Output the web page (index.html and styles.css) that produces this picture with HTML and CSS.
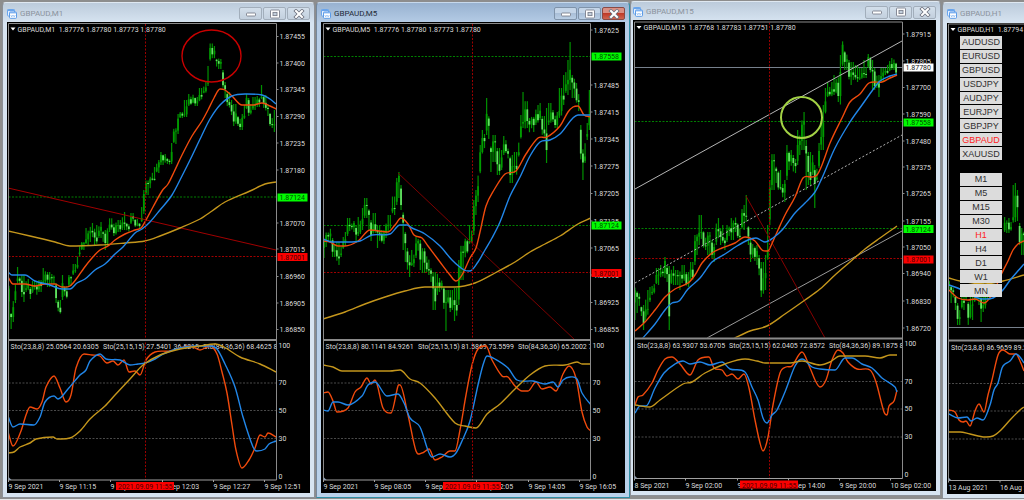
FILE: index.html
```
<!DOCTYPE html>
<html lang="en">
<head>
<meta charset="utf-8">
<title>GBPAUD charts</title>
<link rel="stylesheet" href="styles.css">
</head>
<body>
<svg class="symbols" aria-hidden="true">
  <symbol id="chart-icon" viewBox="0 0 10 10">
    <rect x="0.5" y="0.5" width="7" height="6.5" rx="0.8" fill="#eaf3ff" stroke="#6aa5ec"/>
    <rect x="0.5" y="0.5" width="7" height="1.6" fill="#6aa5ec"/>
    <rect x="2.5" y="3" width="7" height="6.3" rx="0.8" fill="#fff" stroke="#5c9be6"/>
    <rect x="2.5" y="3" width="7" height="1.4" fill="#7fb2f0"/>
    <path d="M3.8 6l.9 1.9L6 6l1.2 1.9L8.3 6" fill="none" stroke="#8dbbf2" stroke-width="0.8"/>
  </symbol>
  <symbol id="min-icon" viewBox="0 0 12 10">
    <rect x="1.5" y="4" width="9" height="3" rx="0.8" fill="#fff" stroke="#7b7f8c" stroke-width="0.9"/>
  </symbol>
  <symbol id="max-icon" viewBox="0 0 12 10">
    <rect x="1.5" y="1" width="9" height="8" rx="0.8" fill="#fff" stroke="#7b7f8c" stroke-width="0.9"/>
    <rect x="4" y="3.4" width="4" height="3.2" fill="#c3cfdd" stroke="#7b7f8c" stroke-width="0.9"/>
  </symbol>
  <symbol id="close-icon" viewBox="0 0 12 10">
    <path d="M3 2l6 6M9 2l-6 6" fill="none" stroke="#6d717e" stroke-width="3.6" stroke-linecap="square"/>
    <path d="M3 2l6 6M9 2l-6 6" fill="none" stroke="#fff" stroke-width="2" stroke-linecap="square"/>
  </symbol>
</svg>

<main class="desktop">
  <section class="window">
    <header class="titlebar">
      <svg class="app-icon"><use href="#chart-icon"/></svg>
      <h2 class="title">GBPAUD,M1</h2>
      <button class="control" aria-label="Minimize"><svg><use href="#min-icon"/></svg></button>
      <button class="control" aria-label="Restore"><svg><use href="#max-icon"/></svg></button>
      <button class="control" aria-label="Close"><svg><use href="#close-icon"/></svg></button>
    </header>
    <svg class="chart" id="m1" viewBox="7 22 303 471"></svg>
  </section>

  <section class="window window-active">
    <header class="titlebar">
      <svg class="app-icon"><use href="#chart-icon"/></svg>
      <h2 class="title">GBPAUD,M5</h2>
      <button class="control" aria-label="Minimize"><svg><use href="#min-icon"/></svg></button>
      <button class="control" aria-label="Restore"><svg><use href="#max-icon"/></svg></button>
      <button class="control control-close" aria-label="Close"><svg><use href="#close-icon"/></svg></button>
    </header>
    <svg class="chart" id="m5" viewBox="321 22 304 471"></svg>
  </section>

  <section class="window window-raised">
    <header class="titlebar">
      <svg class="app-icon"><use href="#chart-icon"/></svg>
      <h2 class="title">GBPAUD,M15</h2>
      <button class="control" aria-label="Minimize"><svg><use href="#min-icon"/></svg></button>
      <button class="control" aria-label="Restore"><svg><use href="#max-icon"/></svg></button>
      <button class="control" aria-label="Close"><svg><use href="#close-icon"/></svg></button>
    </header>
    <svg class="chart" id="m15" viewBox="633 20 303 471"></svg>
  </section>

  <section class="window window-cut">
    <header class="titlebar">
      <svg class="app-icon"><use href="#chart-icon"/></svg>
      <h2 class="title">GBPAUD,H1</h2>
    </header>
    <svg class="chart" id="h1" viewBox="947 23 77 471"></svg>
    <nav class="switcher">
      <div class="switch-group">
        <button class="switch">AUDUSD</button>
        <button class="switch">EURUSD</button>
        <button class="switch">GBPUSD</button>
        <button class="switch">USDJPY</button>
        <button class="switch">AUDJPY</button>
        <button class="switch">EURJPY</button>
        <button class="switch">GBPJPY</button>
        <button class="switch switch-on">GBPAUD</button>
        <button class="switch">XAUUSD</button>
      </div>
      <div class="switch-group">
        <button class="switch">M1</button>
        <button class="switch">M5</button>
        <button class="switch">M15</button>
        <button class="switch">M30</button>
        <button class="switch switch-on">H1</button>
        <button class="switch">H4</button>
        <button class="switch">D1</button>
        <button class="switch">W1</button>
        <button class="switch">MN</button>
      </div>
    </nav>
  </section>
</main>
<script src="charts.js"></script>
</body>
</html>
```
FILE: styles.css
```
* {
  box-sizing: border-box;
}

body {
  margin: 0;
  background: #e4e6e8;
  font-family: Roboto, "Noto Sans", sans-serif;
  overflow: hidden;
}

.symbols {
  display: none;
}

.desktop {
  display: grid;
  grid-template-columns: 315fr 315fr 312fr 82fr;
  align-items: start;
  background: #8d8d8d;
}

.window {
  position: relative;
  margin: 2px 0 0 2px;
  padding: 0 4px 4px;
  border: 1px solid #8b9097;
  border-top-color: #dfe8f1;
  border-radius: 4px 4px 0 0;
  background: linear-gradient(#bccbdb, #d7e4f1 20px, #d7e4f1);
}

.window-active {
  margin-left: 1px;
  border-color: #2f8fa6;
  border-top-color: #c7d9ec;
  border-left-color: #74879c;
  background: linear-gradient(#98b2d0, #b5cce6 20px, #b9d1ea);
}

.window-raised {
  margin: 1px 1px 0 0;
  padding: 0 4px 4px 2px;
}

.window-raised .titlebar {
  height: 18px;
  padding-top: 2px;
}

.window-cut {
  margin-left: 0;
  padding-right: 0;
  border-right: 0;
  border-radius: 4px 0 0 0;
}

.window-cut .titlebar {
  height: 20px;
}

.titlebar {
  display: flex;
  align-items: center;
  gap: 1px;
  height: 19px;
  padding-top: 2px;
}

.app-icon {
  flex: none;
  width: 10px;
  height: 10px;
}

.title {
  flex: 1;
  margin: 0;
  padding-left: 2px;
  color: #8b939d;
  font-size: 8px;
  font-weight: 400;
  line-height: 12px;
}

.window-active .title {
  color: #1f2b38;
}

.control {
  display: grid;
  place-items: center;
  flex: none;
  width: 23px;
  height: 13px;
  padding: 0;
  border: 1px solid #a2aebb;
  border-radius: 2px;
  background: linear-gradient(#d3dfeb, #c3d0de);
}

.window-active .control {
  border-color: #7f93aa;
  background: linear-gradient(#c4d5e8 45%, #a9bfd8 50%, #b9cee5);
}

.window-active .control-close {
  border-color: #8a4a45;
  background: linear-gradient(#d98f84 45%, #bf3a28 50%, #cf6551);
}

.control svg {
  width: 12px;
  height: 10px;
}

.chart {
  display: block;
  width: 100%;
  height: auto;
  background: #000;
}

.chart text {
  font-size: 7px;
  fill: #dcdcdc;
  dominant-baseline: central;
  white-space: pre;
}

.chart .on-green {
  fill: #004a00;
}

.chart .on-red {
  fill: #4a0000;
}

.chart .on-white {
  fill: #202020;
}

.chart .line {
  fill: none;
  stroke-width: 1.4;
  stroke-linejoin: round;
}

.switcher {
  position: absolute;
  top: 33px;
  left: 17px;
  display: flex;
  flex-direction: column;
  gap: 13px;
  width: 42px;
}

.switch-group {
  display: grid;
  grid-auto-rows: 1fr;
  gap: 1px;
  height: 124px;
}

.switch {
  min-height: 0;
  padding: 0;
  border: 0;
  background: #dcdcdc;
  color: #303030;
  font: 9px/12px "Liberation Sans", Arial, sans-serif;
}

.switch-on {
  color: #f22;
}
```
FILE: charts.js
```
const NS = "http://www.w3.org/2000/svg";
const ORANGE = "#f04a0c", BLUE = "#2186e8", GOLD = "#c4961c";
const STEP = 2.14;

function add(parent, name, attrs, text) {
  const el = document.createElementNS(NS, name);
  for (const key in attrs) el.setAttribute(key, attrs[key]);
  if (text !== undefined) el.textContent = text;
  parent.appendChild(el);
  return el;
}

function numbers(s) {
  return s.trim().split(/\s+/).map(p => p.split(",").map(Number));
}

function segment(parent, x1, y1, x2, y2, stroke, extra) {
  add(parent, "line", Object.assign({ x1, y1, x2, y2, stroke, "stroke-width": 1 }, extra));
}

/* Rounded line through the points: each span is a cubic with gentle tangents. */
function curve(parent, points, stroke) {
  const p = numbers(points);
  const slope = i => {
    const a = p[Math.max(0, i - 1)], b = p[Math.min(p.length - 1, i + 1)];
    const turn = i > 0 && i < p.length - 1 && (p[i][1] - a[1]) * (b[1] - p[i][1]) <= 0;
    return turn ? 0 : (b[1] - a[1]) / (b[0] - a[0]);
  };
  let d = `M${p[0]}`;
  for (let i = 1; i < p.length; i++) {
    const a = p[i - 1], b = p[i], k = (b[0] - a[0]) / 3;
    d += `C${a[0] + k} ${a[1] + slope(i - 1) * k} ${b[0] - k} ${b[1] - slope(i) * k} ${b[0]} ${b[1]}`;
  }
  add(parent, "path", { d, class: "line", stroke });
}

/* One candle every STEP, its range read between the nearest known ranges. */
function candles(parent, ranges) {
  let seed = 7, i = 0;
  const rnd = () => (seed = (seed * 16807) % 2147483647) / 2147483647;
  const last = ranges[ranges.length - 1][0];
  let prev = (ranges[0][1] + ranges[0][2]) / 2;
  for (let x = ranges[0][0]; x <= last; x += STEP) {
    while (i < ranges.length - 2 && ranges[i + 1][0] < x) i++;
    const a = ranges[i], b = ranges[i + 1];
    if (b[0] - a[0] > 9) { continue; }
    const near = Math.abs(x - a[0]) < Math.abs(b[0] - x) ? a : b;
    const [, top, low] = near;
    const h = low - top;
    const open = Math.min(low - h * 0.12, Math.max(top + h * 0.12, prev));
    const close = top + h * (0.15 + 0.7 * rnd());
    const y1 = Math.min(open, close), y2 = Math.max(open, close);
    const wickTop = rnd() < 0.65 ? top : (top + y1) / 2;
    const wickLow = rnd() < 0.65 ? low : (low + y2) / 2;
    const down = close > open;
    add(parent, "rect", { x: x - 0.6, y: wickTop, width: 1.2, height: wickLow - wickTop, fill: "#009200" });
    add(parent, "rect", { x: x - 0.9, y: y1, width: 1.8, height: Math.max(1, y2 - y1), fill: down ? "#62e262" : "#009c00" });
    prev = close;
  }
}

function draw(id, c) {
  const svg = document.getElementById(id), { x0, x1, dy } = c;
  const y = v => v + dy;
  const full = x1 > 1024 ? 1024 : x1;
  const clip = add(add(svg, "defs", {}), "clipPath", { id: id + "-clip" });
  add(clip, "rect", { x: x0, y: y(24), width: full - x0, height: 456 });
  const clipTop = add(svg.firstChild, "clipPath", { id: id + "-top" });
  add(clipTop, "rect", { x: x0, y: y(24), width: full - x0, height: 315 });

  const plot = add(svg, "g", { "clip-path": `url(#${id}-clip)` });
  [383, 410.5, 438.5].forEach(v => segment(plot, x0, y(v), full, y(v), "#4a4a4a", { "stroke-dasharray": "2 1.5" }));
  c.sto.forEach(([tx, s]) => add(plot, "text", { x: tx, y: y(347) }, s));
  add(plot, "path", { d: `M${x0 + 2} ${y(27.5)}h5l-2.5 3z`, fill: "#fff" });
  add(plot, "text", { x: x0 + 9, y: y(29.5) }, c.head);

  const upper = add(plot, "g", { "clip-path": `url(#${id}-top)` });
  c.levels.forEach(([v, color, solid]) => segment(upper, x0, v, full, v, color, solid ? {} : { "stroke-dasharray": "2 1.5" }));
  candles(upper, numbers(c.candles));
  c.trends.forEach(([a, b, d, e, color, dash]) => segment(upper, a, b, d, e, color, dash ? { "stroke-dasharray": "2 2" } : {}));
  [GOLD, ORANGE, BLUE].forEach((color, n) => curve(upper, c.ma[n], color));
  [ORANGE, BLUE, GOLD].forEach((color, n) => curve(plot, c.osc[n], color));
  if (c.cross) segment(plot, c.cross, y(24), c.cross, y(480), "#9c0000", { "stroke-dasharray": "2 1.5" });
  if (c.ring) add(plot, "ellipse", c.ring);

  const grey = "#8a8a8a";
  segment(svg, x0, y(23.5), full, y(23.5), grey);
  segment(svg, x0, y(23.5), x0, y(480), grey);
  segment(svg, x0, y(340), full, y(340), grey, { "stroke-width": 2 });
  segment(svg, x0, y(480), full, y(480), "#a0a0a0");
  add(svg, "path", { d: `M${x0} ${y(477)}l3 3h-3z`, fill: "#8fa0b4" });
  if (full === x1) {
    segment(svg, x1, y(23.5), x1, y(480), grey);
    [[100, 345.5], [70, 383], [50, 410.5], [30, 438.5], [0, 476.5]].forEach(([n, v]) =>
      add(svg, "text", { x: x1 + 2, y: y(v) }, n));
  }

  c.times.forEach(([tx, s]) => {
    segment(svg, tx, y(480), tx, y(482), "#a0a0a0");
    add(svg, "text", { x: tx, y: y(487) }, s);
  });
  if (c.stamp) {
    add(svg, "rect", { x: c.stamp, y: y(482), width: 58, height: 8, fill: "#fb0000" });
    add(svg, "text", { x: c.stamp + 2, y: y(487), class: "on-red" }, "2021.09.09 11:55");
  }

  c.prices.forEach(([v, s]) => {
    segment(svg, x1, v, x1 + 2, v, grey);
    add(svg, "text", { x: x1 + 3, y: v + 0.5 }, s);
  });
  c.tags.forEach(([v, s, kind]) => {
    const fill = { green: "#00fb00", red: "#fb0000", white: "#fff" }[kind];
    add(svg, "rect", { x: x1 + 1, y: v - 4, width: 30, height: 8, fill });
    add(svg, "text", { x: x1 + 3, y: v + 0.5, class: "on-" + kind }, s);
  });
}

const GREEN_LEVEL = "#008000", RED_LEVEL = "#a00000";

draw("m1", {
  x0: 8.5, x1: 276.5, dy: 0, cross: 145.5, stamp: 116,
  head: "GBPAUD,M1  1.87776 1.87780 1.87773 1.87780",
  sto: [[10.5, "Sto(23,8,8) 25.0564 20.6305"], [103, "Sto(25,15,15) 27.5401 36.5215"], [203, "Sto(84,36,36) 68.4625 82.1804"]],
  levels: [[197, GREEN_LEVEL], [256.5, RED_LEVEL]],
  trends: [[8, 188, 276, 250, "#a00000"]],
  ring: { cx: 211.5, cy: 56, rx: 29.5, ry: 26, fill: "none", stroke: "#c80000", "stroke-width": 1.4 },
  candles: `9,283,320 11,312,329 14.5,295,327 16,278,303 18,267,283 20,275,284 23,275,302 27,274,292 30,287,304 33,281,293
    37,277,300 40,280,292 45,268,285 50,272,287 53,274,284 56,283,303 59.5,300,315 62,275,300 65,286,300 70,275,286 74,264,275
    77,248,270 79,240,256 83,242,250 87,228,245 92,223,242 95,225,246 100,222,238 104,230,250 108,226,246 111,212,232
    116,220,236 120,220,232 124,212,230 128,222,234 133,213,224 137,219,227 140,223,229 142,207,223 144,190,214 147,178,195
    150,175,193 153,167,182 157,160,173 161,152,165 164,154,165 168,158,167 171,143,164 174,126,144 178,114,134 182,112,118
    186,100,117 190,94,106 193,92,104 197,97,106 201,88,102 205,82,94 208,66,86 211,39,62 214,46,62 216,58,72 220,56,69
    222,70,90 224,82,98 228,92,110 232,100,115 235,104,126 238,116,126 241,114,130 244,105,120 246,94,110 250,98,116
    254,97,110 258,96,107 261,85,100 264,95,113 268,102,116 272,112,128 275.5,110,132`,
  ma: [
    "8,231 30,236 55,242 70,246 100,245 125,243 145,241 160,236 180,228 200,219 212,211 225,202 250,191 265,184 276,182",
    "8,277 13,284 25,284 35,286 45,284 55,284 62,287 70,286 77,278 84,268 92,258 100,250 108,246 115,240 125,234 135,230 141,228 146,220 153,207 162,191 168,184 174,172 182,155 192,136 202,121 208,110 214,98 220,89 225,90 232,96 242,105 253,105 262,103 270,106 276,109",
    "8,272 12,275 25,275 35,281 50,285 62,289 70,289 77,283 85,279 95,270 105,264 115,254 123,247 135,233 142,229 150,222 160,210 172,195 182,176 192,156 202,135 210,119 220,105 232,96 245,94 262,95 270,99 276,104"
  ],
  osc: [
    "8,432 13,446 21,431 26,415 30,407 37,409 42,402 46,387 54,376 60,388 66,402 71,395 76,368 84,354 92,355 100,356 107,363 113,361 118,365 124,360 129,372 135,371 140,375 146,360 155,352 170,351 180,348 190,346 200,350 210,346 217,354 222,372 227,393 232,425 236,450 242,468 249,460 255,448 260,435 265,437 268,433 276,437",
    "8,416 13,427 20,424 34,425 40,417 45,402 54,396 58,399 68,389 80,375 86,370 90,361 100,354 106,359 120,360 130,365 138,364 145,363 155,359 163,354 180,348 195,346 210,346 217,349 225,364 235,387 243,417 253,447 257,451 265,449 269,444 276,441",
    "8,453 14,452 20,447 30,443 36,439 53,437 57,439 70,438 80,431 90,419 105,406 115,395 130,379 143,365 160,355 180,349 200,346 215,344 224,347 240,357 260,364 276,372"
  ],
  times: [[8.5, "9 Sep 2021"], [59.5, "9 Sep 11:15"], [110.5, "9 Sep 11:39"], [162.5, "9 Sep 12:03"], [213.5, "9 Sep 12:27"], [264.5, "9 Sep 12:51"]],
  prices: [[36.5, "1.87455"], [63, "1.87400"], [89.5, "1.87345"], [116.5, "1.87290"], [143, "1.87235"], [170, "1.87180"],
    [223, "1.87070"], [249, "1.87015"], [276.5, "1.86960"], [303, "1.86905"], [329.5, "1.86850"]],
  tags: [[197.5, "1.87124", "green"], [257, "1.87001", "red"]]
});

draw("m5", {
  x0: 323.5, x1: 590.5, dy: 0, cross: 472.5, stamp: 443,
  head: "GBPAUD,M5  1.87776 1.87780 1.87773 1.87780",
  sto: [[325.5, "Sto(23,8,8) 80.1141 84.9261"], [418, "Sto(25,15,15) 81.5869 73.5599"], [518, "Sto(84,36,36) 65.2002 71.0645"]],
  levels: [[56.5, GREEN_LEVEL], [225.5, GREEN_LEVEL], [272.5, RED_LEVEL]],
  trends: [[398, 173, 575, 340, "#7c0000"]],
  candles: `324,238,258 327,230,247 330,224,242 334,238,257 337,242,265 341,240,257 345,232,250 349,218,236 353,221,232
    356,226,243 360,217,236 363,208,230 366,198,218 369,208,230 371,220,241 374,213,235 378,225,248 382,230,244 386,222,238
    390,215,232 394,185,215 397,178,205 399,172,198 401,185,215 403,210,250 405,230,262 409,248,277 413,250,267 417,237,258
    420,240,270 424,245,273 428,250,275 431,266,290 435,272,310 438,265,295 441,278,292 444,285,315 446,290,331 448,290,305
    452,290,312 456,288,321 459,260,305 462,240,280 465,236,262 468,238,255 471,225,245 473,200,235 475,190,215 478,165,202
    480,145,175 483,130,155 486,98,135 488,114,152 491,145,172 494,135,162 498,148,175 501,150,170 505,136,155 508,146,163
    512,155,183 516,152,180 519,133,158 522,115,140 524,92,128 526,93,135 529,118,140 533,115,132 537,105,125 540,103,120
    543,116,140 547,108,163 550,103,125 553,110,122 557,112,128 561,88,120 564,75,105 567,60,95 570,42,90 573,75,98
    576,83,105 578,88,120 580,125,165 582,145,180 585,130,165 588,112,140 590,90,130`,
  ma: [
    "323,319 345,312 365,304 385,297 405,291 425,287 455,287 475,283 495,273 515,262 530,252 545,244 560,236 578,224 591,218",
    "323,241 330,242 338,246 345,246 358,241 370,230 388,232 395,225 401,218 408,224 414,235 422,238 428,246 440,262 450,275 456,281 462,275 470,258 476,248 480,232 486,206 494,190 505,174 516,171 526,154 538,138 547,137 560,126 568,112 573,107 578,106 584,115 591,117",
    "323,239 332,242 345,242 360,241 372,235 390,234 400,225 407,225 412,228 425,234 440,246 452,260 464,270 470,271 478,262 485,250 492,238 500,222 510,196 520,177 530,156 540,142 550,140 560,134 578,115 591,115"
  ],
  osc: [
    "323,393 328,392 333,401 337,412 348,408 355,392 361,387 367,378 371,384 375,380 383,408 391,413 398,386 400,385 408,415 416,451 422,453 429,449 435,460 442,457 450,451 455,451 460,430 466,395 472,365 478,349 486,346 492,360 502,376 508,377 515,386 522,391 528,391 536,382 542,389 550,387 556,391 563,374 569,366 576,378 582,412 587,427 591,431",
    "323,410 328,411 333,402 338,402 348,405 362,396 368,385 375,382 387,396 398,394 404,403 410,418 420,427 432,457 440,454 450,457 456,453 462,441 470,421 478,385 483,365 487,356 495,359 508,368 517,380 533,381 545,384 553,382 558,387 563,380 570,377 577,379 582,393 591,405",
    "323,365 333,367 342,371 365,371 390,371 400,370 410,379 420,383 435,398 455,423 465,426 476,428 487,414 500,404 515,389 530,375 545,366 565,365 577,362 582,364 591,364"
  ],
  times: [[323.5, "9 Sep 2021"], [374.5, "9 Sep 08:05"], [425.5, "9 Sep 10:05"], [476.5, "9 Sep 12:05"], [528.5, "9 Sep 14:05"], [579.5, "9 Sep 16:05"]],
  prices: [[30, "1.87625"], [85, "1.87485"], [112, "1.87415"], [139, "1.87345"], [166, "1.87275"], [193.5, "1.87205"],
    [221, "1.87135"], [248, "1.87065"], [275, "1.86995"], [302.5, "1.86925"], [329.5, "1.86855"]],
  tags: [[56.5, "1.87558", "green"], [225.5, "1.87124", "green"], [273, "1.87001", "red"]]
});

draw("m15", {
  x0: 634.5, x1: 902.5, dy: -1.5, cross: 769.5, stamp: 740,
  head: "GBPAUD,M15  1.87768 1.87783 1.87751 1.87780",
  sto: [[637, "Sto(23,8,8) 63.9307 53.6705"], [729, "Sto(25,15,15) 62.0405 72.8572"], [829, "Sto(84,36,36) 89.1875 88.7409"]],
  levels: [[67.5, "#76808c", true], [121.5, GREEN_LEVEL], [228.5, GREEN_LEVEL], [258.5, RED_LEVEL]],
  trends: [[635, 189, 902, 41, "#b4b4b4"], [635, 283, 902, 135, "#b4b4b4", true], [707, 338, 902, 231, "#9a9a9a"], [746, 196, 825, 338, "#860000"]],
  ring: { cx: 801.5, cy: 117.5, rx: 20.5, ry: 20.5, fill: "none", stroke: "#a3d245", "stroke-width": 2 },
  candles: `635,285,320 638,290,313 641,306,316 644,305,330 646,290,320 650,287,302 653,280,295 657,268,285 661,265,280
    665,257,278 668,266,282 670,266,330 672,266,285 676,270,285 680,268,290 684,265,283 688,272,287 692,262,282 695,235,265
    697,232,255 701,215,245 705,230,250 708,232,255 713,240,262 717,218,245 721,225,245 725,235,250 729,225,242 732,218,240
    735,212,232 739,222,240 744,205,230 746,195,222 748,225,245 752,240,262 756,245,265 760,255,282 762,262,297 765,255,290
    768,225,262 770,180,225 773,148,190 776,165,195 780,170,192 784,180,202 787,145,180 791,150,170 795,155,180 799,130,165
    802,116,150 804,112,150 806,140,190 809,152,185 812,155,175 814,165,208 817,160,182 819,135,170 822,105,150 825,88,115
    830,82,98 835,75,95 839,72,108 841,55,113 843,38,68 846,50,70 849,60,82 853,62,85 857,65,82 861,68,80 865,60,78
    868,54,68 871,57,75 873,60,108 876,68,90 879,75,97 883,68,82 887,65,75 891,58,72 894,56,70 897,62,76`,
  ma: [
    "733,339 750,331 767,326 785,314 805,300 820,289 835,275 850,262 865,249 880,238 897,226",
    "635,331 645,322 655,310 665,297 675,289 688,283 695,275 702,263 712,253 722,248 735,243 745,237 755,241 762,250 768,251 770,248 778,230 785,215 795,197 803,178 812,177 817,175 822,165 830,143 842,118 850,102 860,94 869,83 882,82 890,78 897,75",
    "642,339 655,324 665,310 672,303 679,301 688,289 700,278 712,262 725,254 737,246 748,240 756,238 765,242 773,238 783,229 795,213 805,203 815,192 822,178 835,148 850,122 862,105 872,91 880,81 890,76 897,74"
  ],
  osc: [
    "635,405 638,397 643,395 652,383 658,370 665,359 672,357 680,364 690,375 698,360 709,357 714,368 722,370 727,376 732,374 738,379 744,374 749,388 755,420 760,443 763,451 768,437 773,405 780,373 786,367 792,366 802,352 810,368 816,382 820,387 826,380 832,360 838,350 843,353 848,362 857,369 870,370 876,382 884,412 887,415 889,406 894,401 897,390",
    "635,413 640,406 646,406 655,388 664,373 675,364 683,361 690,364 700,362 710,365 722,362 730,369 745,372 752,387 758,400 763,418 767,423 772,415 777,410 785,392 795,366 802,359 812,367 820,369 835,370 845,358 852,358 862,364 872,368 882,378 895,387 897,392",
    "635,405 650,407 660,400 683,384 692,382 705,373 725,364 745,359 757,361 765,363 790,363 802,361 820,365 830,362 840,356 865,356 880,358 890,355 897,355"
  ],
  times: [[634.5, "8 Sep 2021"], [685.5, "9 Sep 02:00"], [737.5, "9 Sep 08:00"], [788.5, "9 Sep 14:00"], [839.5, "9 Sep 20:00"], [890.5, "10 Sep 02:00"]],
  prices: [[34, "1.87915"], [61, "1.87805"], [87.5, "1.87700"], [114, "1.87590"], [141, "1.87480"], [167, "1.87375"],
    [193.5, "1.87265"], [221, "1.87155"], [247, "1.87050"], [273.5, "1.86940"], [301, "1.86830"], [328, "1.86720"]],
  tags: [[67.5, "1.87780", "white"], [122.5, "1.87558", "green"], [229, "1.87124", "green"], [259.5, "1.87001", "red"]]
});

draw("h1", {
  x0: 948.5, x1: 1216, dy: 0.5,
  head: "GBPAUD,H1  1.87794",
  sto: [[951, "Sto(23,8,8) 86.9659 89.2041"]],
  levels: [[327.5, "#76808c", true]],
  trends: [],
  candles: `949,280,290 952,285,303 955,295,310 959,303,325 963,285,310 966,280,300 968,300,332 972,295,320 976,285,303
    979,285,305 981,295,322 985,280,312 988,275,300 991,275,300 1003,226,238 1005,217,232 1008,218,233 1011,222,232
    1014,185,225 1016,183,222 1018,190,235 1020,223,248 1023,228,255 1024,230,255`,
  ma: [
    "949,278 960,281 985,284 1003,281 1024,275",
    "949,290 958,298 968,300 975,299 984,303 993,293 1001,275 1008,261 1013,250 1018,244 1024,241",
    "949,285 960,289 975,297 983,299 993,298 1002,291 1011,279 1024,264"
  ],
  osc: [
    "949,410 955,412 959,420 963,422 966,421 970,426 975,411 979,404 984,412 988,395 992,380 998,355 1003,350 1010,354 1016,354 1020,361 1024,371",
    "949,414 958,418 967,417 971,421 977,418 983,420 990,405 994,390 998,383 1002,368 1005,364 1010,361 1016,354 1020,357 1024,363",
    "949,432 960,432 970,434 985,437 993,436 1001,430 1010,420 1020,410 1024,407"
  ],
  times: [[948.5, "13 Aug 2021"], [1000, "16 Aug 22:00"]],
  prices: [],
  tags: []
});
```
